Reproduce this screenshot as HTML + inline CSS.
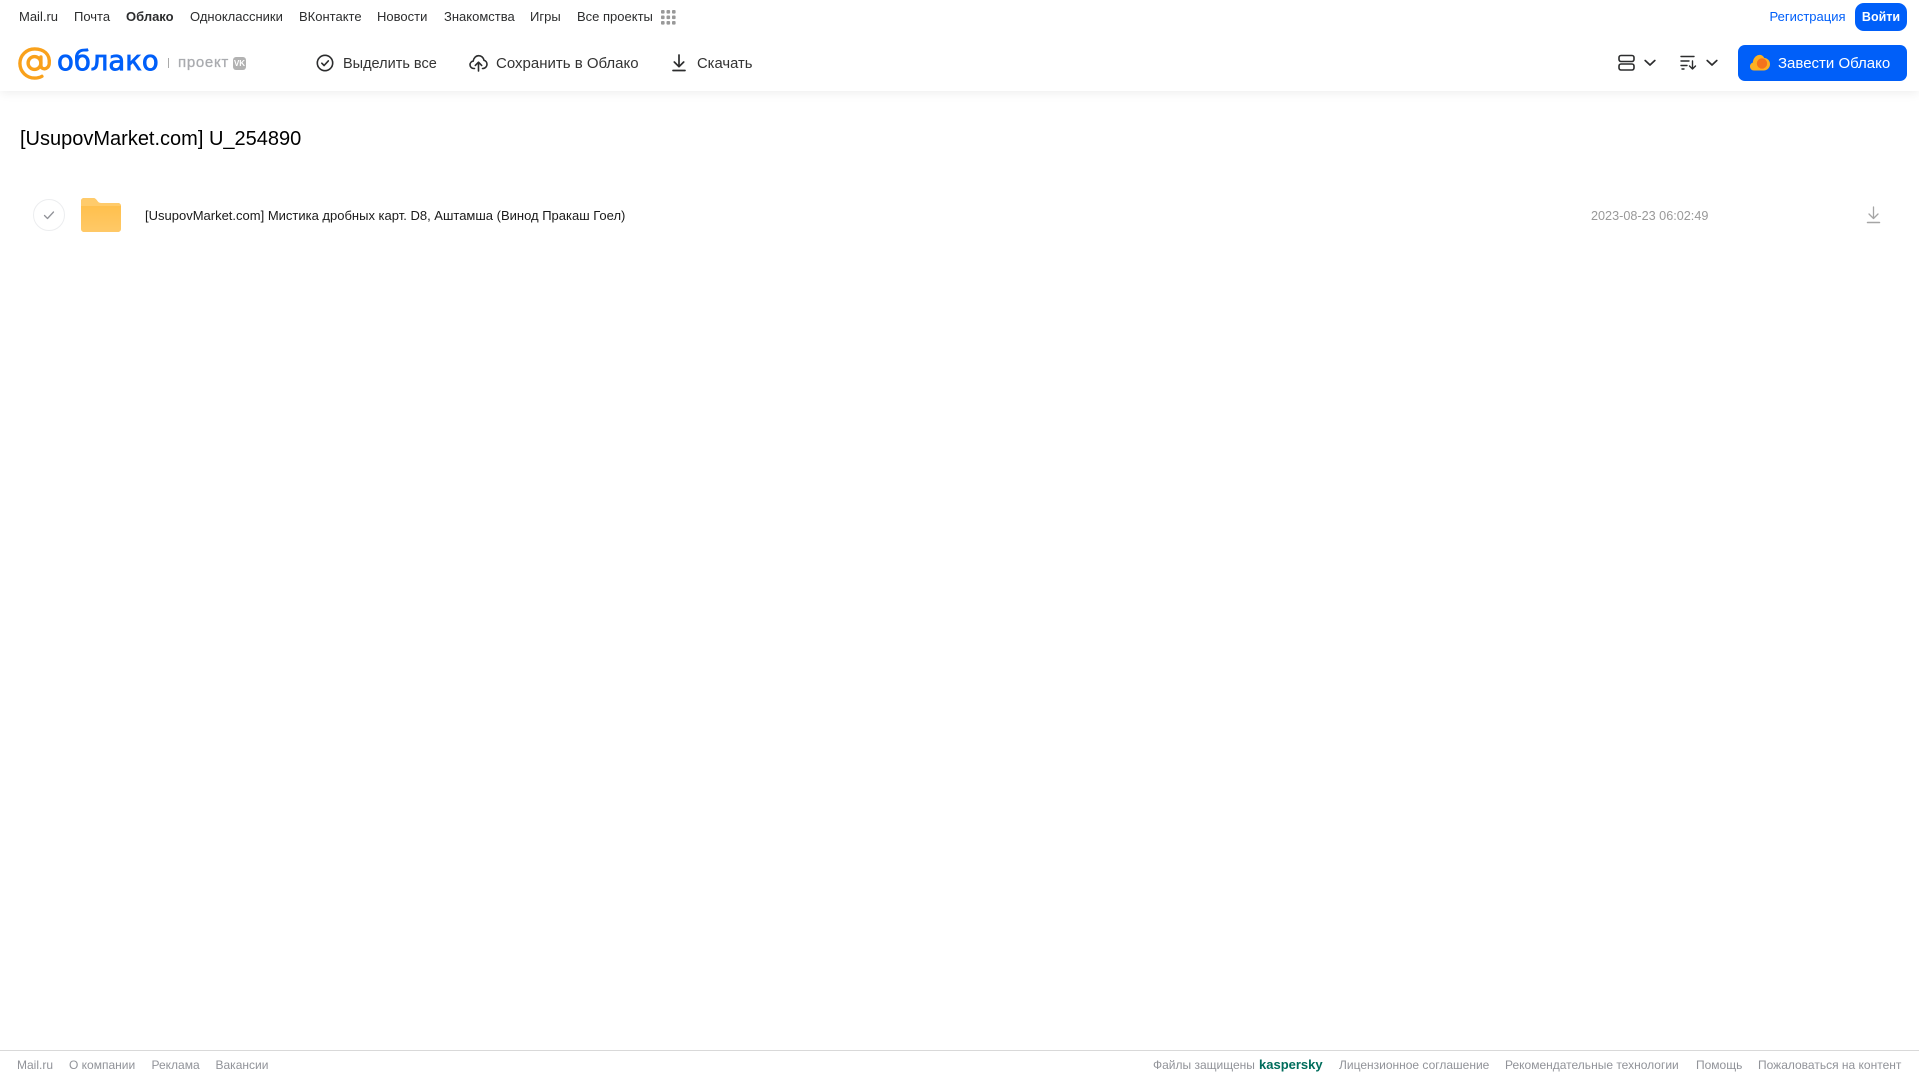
<!DOCTYPE html>
<html lang="ru">
<head>
<meta charset="utf-8">
<title>[UsupovMarket.com] U_254890</title>
<style>
html,body{margin:0;padding:0;width:1919px;height:1079px;overflow:hidden;background:#fff;font-family:"Liberation Sans",Arial,sans-serif}
.t{position:absolute;white-space:nowrap;line-height:16px}
.n{top:9px;font-size:13px;color:#2c2d2e}
.a{top:56px;font-size:14.8px;color:#333;line-height:16px}
.f{top:1057px;font-size:12px;color:#919399}
svg{position:absolute;overflow:visible}
</style>
</head>
<body>
<div style="position:absolute;left:0;top:0;width:1919px;height:91px;background:#fff;box-shadow:0 2px 10px rgba(0,0,0,.07)"></div>

<span class="t n" style="left:19px">Mail.ru</span>
<span class="t n" style="left:74px">Почта</span>
<span class="t n" style="left:126px;font-weight:bold">Облако</span>
<span class="t n" style="left:190px">Одноклассники</span>
<span class="t n" style="left:299px">ВКонтакте</span>
<span class="t n" style="left:377px">Новости</span>
<span class="t n" style="left:444px">Знакомства</span>
<span class="t n" style="left:530px">Игры</span>
<span class="t n" style="left:577px">Все проекты</span>
<svg style="left:661px;top:10px" width="15" height="15" fill="#999"><rect x="0" y="0" width="3.6" height="3.6" rx="1"/><rect x="5.5" y="0" width="3.6" height="3.6" rx="1"/><rect x="11" y="0" width="3.6" height="3.6" rx="1"/><rect x="0" y="5.5" width="3.6" height="3.6" rx="1"/><rect x="5.5" y="5.5" width="3.6" height="3.6" rx="1"/><rect x="11" y="5.5" width="3.6" height="3.6" rx="1"/><rect x="0" y="11" width="3.6" height="3.6" rx="1"/><rect x="5.5" y="11" width="3.6" height="3.6" rx="1"/><rect x="11" y="11" width="3.6" height="3.6" rx="1"/></svg>

<span class="t n" style="left:1769.500px;color:#005ff9">Регистрация</span>
<div style="position:absolute;left:1855px;top:3px;width:52px;height:28px;border-radius:9px;background:#005ff9;color:#fff;font-size:12.500px;font-weight:bold;line-height:28px;text-align:center">Войти</div>

<!-- logo -->
<svg style="left:18px;top:47px" width="34" height="33" viewBox="0 0 34 33" fill="none" stroke="#f9a11b" stroke-width="3.400"><circle cx="16.500" cy="16" r="6.400"/><path d="M22.900 10v8.500c0 4.600 7.400 4.600 8.300-1.500C32.400 7 25.500 1.900 16.700 1.900 8.300 1.900 1.900 8.400 1.900 16.400c0 8.500 6.800 14.700 14.800 14.700 2.800 0 5.100-.6 7.200-1.800" stroke-linecap="round"/></svg>
<span class="t" style="left:57px;top:43px;font-size:27.500px;line-height:36px;color:#005ff9;-webkit-text-stroke:.8px #005ff9;font-family:'DejaVu Sans','Liberation Sans',sans-serif">облако</span>
<div style="position:absolute;left:168px;top:58px;width:1px;height:10px;background:#aaa"></div>
<span class="t" style="left:178px;top:55px;font-size:15px;color:#a9abaf;-webkit-text-stroke:.3px #a9abaf;letter-spacing:.7px">проект</span>
<div style="position:absolute;left:233px;top:57px;width:13px;height:13px;border-radius:3px;background:#b2b2b2;color:#fff;font-size:8px;font-weight:bold;line-height:13px;text-align:center">VK</div>

<!-- actions -->
<svg style="left:316px;top:54px" width="18" height="18" viewBox="0 0 18 18" fill="none" stroke="#2c2d2e" stroke-width="1.600"><circle cx="9" cy="9" r="7.700"/><path d="M5.800 9.200l2.300 2.300 4.200-4.600" stroke-linecap="round" stroke-linejoin="round"/></svg>
<span class="t a" style="left:343px;font-size:14.500px">Выделить все</span>
<svg style="left:469px;top:54px" width="19" height="18" viewBox="0 0 19 18" fill="none" stroke="#2c2d2e" stroke-width="1.600" stroke-linecap="round" stroke-linejoin="round"><path d="M5.500 14.500H4.800C2.700 14.500 1 12.900 1 10.800c0-1.900 1.400-3.400 3.200-3.700C4.700 3.900 6.900 1.700 9.700 1.700c2.700 0 4.800 2 5.300 4.600 1.700.4 3 2 3 3.900 0 2.300-1.700 4.300-4.200 4.300h-.3"/><path d="M9.500 17V8.500M6.300 11.400l3.200-3.200 3.200 3.200"/></svg>
<span class="t a" style="left:496px;font-size:15px">Сохранить в Облако</span>
<svg style="left:671px;top:54px" width="16" height="18" viewBox="0 0 16 18" fill="none" stroke="#2c2d2e" stroke-width="1.700" stroke-linecap="round" stroke-linejoin="round"><path d="M8 1v11.500M3.300 8l4.700 4.700L12.700 8M2 16.500h12"/></svg>
<span class="t a" style="left:697px">Скачать</span>

<!-- right controls -->
<svg style="left:1618px;top:54px" width="18" height="18" viewBox="0 0 18 18" fill="none" stroke="#2c2d2e" stroke-width="1.600"><rect x="1" y="1.500" width="15" height="6" rx="2"/><rect x="1" y="10" width="15" height="6" rx="2"/></svg>
<svg style="left:1644px;top:59px" width="12" height="8" viewBox="0 0 12 8" fill="none" stroke="#2c2d2e" stroke-width="1.700" stroke-linecap="round" stroke-linejoin="round"><path d="M1.200 1.500L6 6l4.800-4.500"/></svg>
<svg style="left:1680px;top:55px" width="18" height="16" viewBox="0 0 18 16" fill="none" stroke="#2c2d2e" stroke-width="1.400" stroke-linecap="round" stroke-linejoin="round"><path d="M1 1.500h13M1 6h8M1 10.500h6M2 14h2M12.500 6v8M9.500 11l3 3 3-3"/></svg>
<svg style="left:1706px;top:59px" width="12" height="8" viewBox="0 0 12 8" fill="none" stroke="#2c2d2e" stroke-width="1.700" stroke-linecap="round" stroke-linejoin="round"><path d="M1.200 1.500L6 6l4.800-4.500"/></svg>

<div style="position:absolute;left:1738px;top:45px;width:169px;height:36px;border-radius:7px;background:#005ff9"></div>
<svg style="left:1750px;top:54px" width="20" height="17" viewBox="0 0 20 17"><path d="M4 16.500C1.800 16.500 0 14.800 0 12.500c0-2 1.200-3.400 2.800-3.900C3.100 4.500 5.700 1.500 8.700 1c2.600-.5 4.600 1 5.600 3 3 .2 5.700 2.500 5.700 6 0 3.700-2.700 6.500-6.300 6.500z" fill="#fdb022"/><circle cx="12" cy="9.500" r="5.200" fill="#f4731c"/></svg>
<span class="t" style="left:1778px;top:56px;font-size:15px;color:#fff">Завести Облако</span>

<!-- title -->
<span class="t" style="left:20px;top:126px;font-size:20px;line-height:26px;color:#000">[UsupovMarket.com] U_254890</span>

<!-- row -->
<svg style="left:33px;top:199px" width="32" height="32" viewBox="0 0 32 32" fill="none"><circle cx="16" cy="16" r="15.500" stroke="#ecedef"/><path d="M11.500 16.500l3 3 6-6.500" stroke="#919399" stroke-width="1.300" stroke-linecap="round" stroke-linejoin="round"/></svg>
<svg style="left:81px;top:198px" width="40" height="34" viewBox="0 0 40 34"><defs><linearGradient id="g" x1="0" y1="0" x2="0" y2="1"><stop offset="0" stop-color="#ffbd45"/><stop offset="1" stop-color="#ffc967"/></linearGradient></defs><path d="M3 0h9c2 0 3 1 4 2.500S18 5 20 5h17c1.700 0 3 1.300 3 3v23c0 1.700-1.300 3-3 3H3c-1.700 0-3-1.300-3-3V3c0-1.700 1.300-3 3-3z" fill="url(#g)"/><path d="M0 8h40c0-1.700-1.300-3-3-3H20c-2 0-3-1-4-2.500S14 0 12 0H3C1.300 0 0 1.300 0 3z" fill="#ffcb6b"/></svg>
<span class="t" style="left:145px;top:208px;font-size:13px;color:#1a1a1a">[UsupovMarket.com] Мистика дробных карт. D8, Аштамша (Винод Пракаш Гоел)</span>
<span class="t" style="left:1591px;top:208px;font-size:12.650px;color:#999">2023-08-23 06:02:49</span>
<svg style="left:1866px;top:206px" width="15" height="18" viewBox="0 0 15 18" fill="none" stroke="#a5a5a5" stroke-width="1.300" stroke-linecap="round" stroke-linejoin="round"><path d="M7.500 1v11M3 8l4.500 4.500L12 8"/><path d="M1.500 16.500h12" stroke-width="1.500"/></svg>

<!-- footer -->
<div style="position:absolute;left:0;top:1050px;width:1919px;height:1px;background:#d9d9d9"></div>
<span class="t f" style="left:17px">Mail.ru</span>
<span class="t f" style="left:69px">О компании</span>
<span class="t f" style="left:151.500px">Реклама</span>
<span class="t f" style="left:215.500px">Вакансии</span>
<span class="t f" style="left:1153px">Файлы защищены</span>
<span class="t f" style="left:1259px;color:#006d5c;font-weight:bold;font-size:13px">kaspersky</span>
<span class="t f" style="left:1339px">Лицензионное соглашение</span>
<span class="t f" style="left:1505px">Рекомендательные технологии</span>
<span class="t f" style="left:1696px">Помощь</span>
<span class="t f" style="left:1758px">Пожаловаться на контент</span>
</body>
</html>
